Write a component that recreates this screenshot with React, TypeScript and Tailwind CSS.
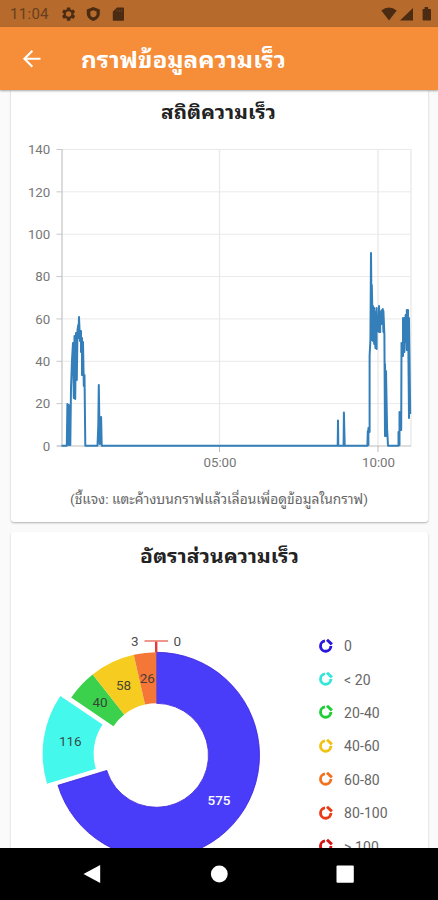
import React from "react";

const yTicks = [140, 120, 100, 80, 60, 40, 20, 0];
const yOf = (v: number) => 316 - (v * 296.5) / 140;

const speedLine =
  "M51.5 315.8H56.8L57.4 274L58 315L58.8 275L59.7 315H60.3L61 258L62 230L63 213L63.8 268L64.5 206L65.2 269L66 203L66.8 250L67.5 200L68.3 195V208L69 187L70 211L71 201V222L72 208V245L73 212L73.8 256L74.5 245L75.3 315.8H87.5L88.3 295L88.8 255L89.7 314L90.3 300L91.1 287L91.7 315.8H327.7L328 290.5L328.3 315.8H333.6L333.9 282.5L334.7 315.8H357.4L357.8 301L358.4 315V298L359.6 302V226L360.4 210L361 123L361.8 210V155L363 211V176L364.2 214V178L365.4 218V182L366.6 219V178L367.8 201V186L369 202V176L370.2 202V182L371.4 194V181L372.8 179L373.4 202V181L374.4 205L375 306V234L376 306V241L377.2 306V300L378 315.8H388.5V302L389.5 315V282L391.2 300L391.5 213L393 226V188L394.4 222V188L395.6 212V185L396.8 220V180L398 218V180L399 288V188L400.2 284";

const legend = [
  { color: "#2818dd", label: "0" },
  { color: "#34e6da", label: "< 20" },
  { color: "#1dce37", label: "20-40" },
  { color: "#f1c113", label: "40-60" },
  { color: "#f17221", label: "60-80" },
  { color: "#ea3a17", label: "80-100" },
  { color: "#d81515", label: "> 100" },
];

function slice(from: number, to: number, shift = 0) {
  const rad = Math.PI / 180;
  const mid = ((from + to) / 2) * rad;
  const cx = 146.5 + shift * Math.sin(mid);
  const cy = 225.3 - shift * Math.cos(mid);
  const p = (r: number, a: number) =>
    `${cx + r * Math.sin(a * rad)} ${cy - r * Math.cos(a * rad)}`;
  const large = to - from > 180 ? 1 : 0;
  return `M${p(103, from)}A103 103 0 ${large} 1 ${p(103, to)}L${p(52, to)}A52 52 0 ${large} 0 ${p(52, from)}Z`;
}

function StatusBar() {
  return (
    <div className="flex h-[27px] shrink-0 items-center bg-[#b66a2c] text-[#4b2b12]">
      <span className="ml-[10px] mt-[2px] w-[51px] text-[15px] leading-none tracking-[0.3px] text-[#67401f]">11:04</span>
      <svg className="h-4 w-[72px]" viewBox="0 0 72 16" fill="currentColor">
        <path transform="translate(-0.7 -0.2) scale(.69)" d="M19.14 12.94c.04-.3.06-.61.06-.94s-.02-.64-.07-.94l2.03-1.58a.49.49 0 0 0 .12-.61l-1.92-3.32a.49.49 0 0 0-.59-.22l-2.39.96a7 7 0 0 0-1.62-.94l-.36-2.54a.48.48 0 0 0-.48-.41h-3.84a.47.47 0 0 0-.47.41l-.36 2.54c-.59.24-1.13.57-1.62.94l-2.39-.96a.48.48 0 0 0-.59.22L2.74 8.87a.48.48 0 0 0 .12.61l2.03 1.58a6 6 0 0 0 0 1.88l-2.03 1.58a.49.49 0 0 0-.12.61l1.92 3.32c.12.22.37.29.59.22l2.39-.96c.5.38 1.03.7 1.62.94l.36 2.54c.05.24.24.41.48.41h3.84c.24 0 .44-.17.47-.41l.36-2.54a7 7 0 0 0 1.62-.94l2.39.96c.22.08.47 0 .59-.22l1.92-3.32a.47.47 0 0 0-.12-.61zM12 16a4 4 0 1 1 0-8 4 4 0 0 1 0 8" />
        <path fillRule="evenodd" d="M32.3 1 38.8 3.5V7.4c0 3.3-2.6 6.3-6.5 7.6-3.9-1.3-6.5-4.3-6.5-7.6V3.5ZM32.3 4.2 29.3 5.6V8c0 1.9 1.2 3.2 3 3.2S35.6 10 35.6 8V5.6Z" />
        <path d="M56 1.5h6.2q.8 0 .8.8v11.6q0 .8-.8.8H52.6q-.8 0-.8-.8V5.7Z" />
        <path d="M56 3.5v2.4M58.3 3.5v2.4M60.6 3.5v2.4" stroke="#7a4722" strokeWidth=".8" />
      </svg>
      <svg className="ml-auto mr-[7px] h-4 w-[51px]" viewBox="0 0 51 16" fill="currentColor">
        <path d="M1.3 4.6Q9 -1.5 16.7 4.6L9 14.4Z" />
        <path d="M33 2V14.5H20Z" />
        <path d="M42.6 3h2V1h3.5v2h2q1 0 1 1v9.6q0 1-1 1h-6.5q-1 0-1-1Z" />
      </svg>
    </div>
  );
}

function SpeedChart() {
  return (
    <svg className="block h-[350px] w-full shrink-0" viewBox="1 0 417 350">
      <g fill="none" stroke="#e9e9e9" strokeWidth="1">
        {yTicks.slice(0, 7).map((v) => (
          <path key={v} d={`M52 ${yOf(v)}H401`} />
        ))}
        <path d="M209.5 19V316M368 19V316M401 19V316" strokeWidth="1.3" />
        <path d="M52 19V316" stroke="#cfcfcf" strokeWidth="1.5" />
        <path d="M47 316H401M209.5 316V322M368 316V322" stroke="#bdbdbd" />
        {yTicks.map((v) => (
          <path key={v} d={`M46.5 ${yOf(v)}H52`} stroke="#c8c8c8" />
        ))}
      </g>
      <path d={speedLine} fill="none" stroke="#347fb9" strokeWidth="2" strokeLinejoin="round" />
      <g fontSize="13.3" fill="#777">
        {yTicks.map((v) => (
          <text key={v} x="40.3" y={yOf(v) + 4.7} textAnchor="end">{v}</text>
        ))}
        <text x="210" y="337.3" textAnchor="middle">05:00</text>
        <text x="368.5" y="337.3" textAnchor="middle">10:00</text>
      </g>
    </svg>
  );
}

function RatioChart() {
  return (
    <svg className="block h-[330px] w-[289px] shrink-0" viewBox="1 0 289 330">
      <path d={slice(0, 253.06)} fill="#493dfa" stroke="#3a20d8" strokeWidth=".8" />
      <path d={slice(253.06, 304.11, 11)} fill="#45f8ec" />
      <path d={slice(304.11, 321.71)} fill="#3bd14d" />
      <path d={slice(321.71, 347.24)} fill="#f7cc20" />
      <path d={slice(347.24, 359.9)} fill="#f47738" />
      <path d="M146.2 122.5V111.5" stroke="#e33a35" strokeWidth="2.4" />
      <path d="M134.5 111H158" stroke="#ea6a5c" strokeWidth="1.4" />
      <g fontSize="13.5" textAnchor="middle" fill="#333" fillOpacity=".9">
        <text x="124.7" y="116">3</text>
        <text x="167.3" y="116">0</text>
        <text x="60.3" y="216.3">116</text>
        <text x="90" y="176.8">40</text>
        <text x="113.5" y="159.5">58</text>
        <text x="137.3" y="152.8">26</text>
      </g>
      <text x="209" y="275.3" textAnchor="middle" fontSize="13.5" fontWeight="500" fill="#fff">575</text>
    </svg>
  );
}

export default function App() {
  return (
    <div className="flex h-[900px] w-[438px] flex-col overflow-hidden bg-[#fafafa] font-[Roboto,'Noto_Sans_Thai_Looped','Noto_Looped_Thai',Loma,Waree,Garuda,'Droid_Sans_Thai','Noto_Sans_Thai','Noto_Sans',sans-serif]">
      <StatusBar />
      <header className="z-10 flex h-[63px] shrink-0 items-center bg-[#f68d39] text-white shadow-[0_1px_2px_rgba(0,0,0,.35)]">
        <svg className="ml-[22px] h-5 w-5" viewBox="0 0 20 20" fill="none" stroke="currentColor" strokeWidth="2.1">
          <path d="M18.5 9.8H3M10.4 1.8 2.4 9.8l8 8" />
        </svg>
        <svg className="ml-[39px] h-[50px] w-[210px]" viewBox="0 0 210 50">
          <text x="0" y="34.3" fontSize="22" fontWeight="700" fill="#fff" textLength="205" lengthAdjust="spacingAndGlyphs">กราฟข้อมูลความเร็ว</text>
        </svg>
      </header>
      <main className="flex h-[758px] shrink-0 flex-col overflow-hidden pl-[11px] pr-[10px]">
        <section className="flex h-[432px] shrink-0 flex-col rounded-b-[3px] bg-white shadow-[0_1px_2px_rgba(0,0,0,.3)]">
          <svg className="block h-10 w-full shrink-0" viewBox="1 0 417 40">
            <text x="151" y="29" fontSize="19" fontWeight="700" fill="#222" textLength="115" lengthAdjust="spacingAndGlyphs">สถิติความเร็ว</text>
          </svg>
          <SpeedChart />
          <svg className="block h-[42px] w-full shrink-0" viewBox="1 0 417 42">
            <text x="60" y="23.5" fontSize="13.5" fill="#666" textLength="298" lengthAdjust="spacingAndGlyphs">(ชี้แจง: แตะค้างบนกราฟแล้วเลื่อนเพื่อดูข้อมูลในกราฟ)</text>
          </svg>
        </section>
        <section className="relative mt-[10px] flex h-[340px] shrink-0 rounded-[3px] bg-white shadow-[0_1px_2px_rgba(0,0,0,.25)]">
          <svg className="absolute left-0 top-0 h-11 w-full" viewBox="1 0 417 44">
            <text x="130" y="30.5" fontSize="19" fontWeight="700" fill="#222" textLength="159" lengthAdjust="spacingAndGlyphs">อัตราส่วนความเร็ว</text>
          </svg>
          <div className="-mt-[2px]"><RatioChart /></div>
          <ul className="ml-[18px] mt-[97px]">
            {legend.map((item) => (
              <li key={item.label} className="flex h-[33.4px] items-center text-[14px] tracking-[0.1px] text-[#666]">
                <svg className="mr-[10px] h-4 w-4" viewBox="0 0 16 16" fill="none" stroke={item.color} strokeWidth="2.9">
                  <path d="M7 2.9A5.2 5.2 0 1 0 12.9 8" />
                  <path d="M9 1.7 13.9 6.4" />
                </svg>
                <span className="pt-[2px]">{item.label}</span>
              </li>
            ))}
          </ul>
        </section>
      </main>
      <nav className="z-10 h-[52px] shrink-0 bg-black">
        <svg className="block h-full w-full" viewBox="0 0 438 52" fill="#fff">
          <path d="M83.5 26 100.2 17V35Z" />
          <circle cx="219.3" cy="26" r="8.4" />
          <rect x="336.5" y="17.5" width="17.3" height="17.3" rx="1" />
        </svg>
      </nav>
    </div>
  );
}
